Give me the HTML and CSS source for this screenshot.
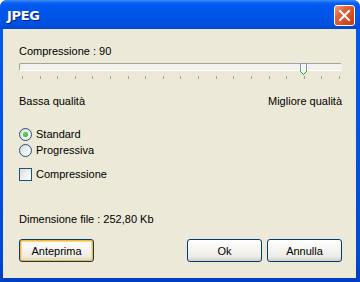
FILE: index.html
```html
<!DOCTYPE html>
<html>
<head>
    <title>JPEG</title>
    <link rel="stylesheet" href="styles.css">
</head>
<body>
    <div class="window">
        <div class="titlebar">
            <span class="title">JPEG</span>
            <span class="close">
                <svg width="19" height="19" viewBox="0 0 19 19">
                    <path d="M5 5 L14 14 M14 5 L5 14" stroke="#fff" stroke-width="2" stroke-linecap="square"/>
                </svg>
            </span>
        </div>
        <div class="client">
            <div class="label">Compressione : 90</div>

            <div class="slider">
                <div class="track"></div>
                <div class="ticks">
                    <i></i><i></i><i></i><i></i><i></i><i></i><i></i><i></i><i></i><i></i>
                    <i></i><i></i><i></i><i></i><i></i><i></i><i></i><i></i><i></i>
                </div>
                <svg class="thumb" width="7" height="13" viewBox="0 0 7 13">
                    <path d="M0.5 0.5 H6.5 V8.5 L3.5 11.5 L0.5 8.5 Z" fill="#F5F5F1" stroke="#7E9DB9"/>
                    <path d="M0.5 7.5 V8.5 L3.5 11.5 L6.5 8.5 V7.5" fill="none" stroke="#21A121"/>
                </svg>
            </div>

            <div class="range-labels">
                <span>Bassa qualità</span>
                <span>Migliore qualità</span>
            </div>

            <div class="options">
                <div class="opt"><span class="radio checked"></span>Standard</div>
                <div class="opt"><span class="radio"></span>Progressiva</div>
            </div>

            <div class="opt check-row"><span class="checkbox"></span>Compressione</div>

            <div class="label size">Dimensione file : 252,80 Kb</div>

            <div class="buttons">
                <button class="btn default">Anteprima</button>
                <div class="right">
                    <button class="btn">Ok</button>
                    <button class="btn">Annulla</button>
                </div>
            </div>
        </div>
    </div>
</body>
</html>
```

FILE: styles.css
```css
html, body {
    margin: 0;
    padding: 0;
    background: #fff;
}
body {
    width: 360px;
    height: 282px;
    overflow: hidden;
    font-family: "Liberation Sans", Arial, sans-serif;
    font-size: 11px;
    color: #000;
}
.window {
    width: 360px;
    height: 282px;
    box-sizing: border-box;
    border-radius: 7px 7px 0 0;
    background: linear-gradient(#0A5FEA, #0058EE 10%, #0054E3 40%, #0148D8 90%, #003DC0);
    display: flex;
    flex-direction: column;
}
.titlebar {
    height: 29px;
    box-sizing: border-box;
    padding: 2px 5px 0 7px;
    display: flex;
    align-items: center;
    justify-content: space-between;
    border-radius: 7px 7px 0 0;
    background: linear-gradient(#3D8DF7, #0A5FF2 3px, #0058EE 6px, #0055E6 55%, #0150E0 85%, #0046D0);
}
.title {
    color: #fff;
    font-family: "DejaVu Sans", sans-serif;
    font-weight: bold;
    font-size: 13px;
    letter-spacing: -0.3px;
    text-shadow: 1px 1px 0 #0A1E80;
}
.close {
    width: 19px;
    height: 19px;
    border: 1px solid #fff;
    border-radius: 3px;
    background: linear-gradient(135deg, #F0A080, #E2613A 35%, #D54A20 70%, #C23A12);
    display: flex;
}
.client {
    flex: 1;
    margin: 0 4px 4px 3px;
    background: #ECE9D8;
    padding: 16px 14px 0 16px;
}
.label {
    height: 13px;
    line-height: 13px;
}
.slider {
    position: relative;
    margin-top: 5px;
    height: 21px;
}
.track {
    margin-top: 3px;
    height: 6px;
    border: 1px solid;
    border-color: #A5A29A #F4F3EE #FFFFFF #A5A29A;
    border-radius: 2px;
    background: #F3F2EC;
}
.ticks {
    margin-top: 5px;
    padding: 0 2px 0 3px;
    display: flex;
    justify-content: space-between;
}
.ticks i {
    width: 1px;
    height: 3px;
    background: #A09F98;
}
.thumb {
    position: absolute;
    left: 281px;
    top: 0;
}
.range-labels {
    margin-top: 11px;
    height: 13px;
    line-height: 13px;
    display: flex;
    justify-content: space-between;
}
.options {
    margin-top: 18px;
}
.opt {
    height: 16px;
    display: flex;
    align-items: center;
}
.radio {
    width: 11px;
    height: 11px;
    border: 1px solid #1C5180;
    border-radius: 50%;
    background: linear-gradient(135deg, #DCDCD7, #FFFFFF);
    margin-right: 4px;
    display: flex;
    align-items: center;
    justify-content: center;
}
.radio.checked::after {
    content: "";
    width: 5px;
    height: 5px;
    border-radius: 50%;
    background: radial-gradient(circle at 40% 40%, #6CD96C, #21A121);
}
.check-row {
    margin-top: 8px;
}
.checkbox {
    width: 11px;
    height: 11px;
    border: 1px solid #1C5180;
    background: linear-gradient(135deg, #DCDCD7, #FFFFFF);
    margin-right: 4px;
}
.size {
    margin-top: 31px;
}
.buttons {
    margin-top: 13px;
    display: flex;
    justify-content: space-between;
}
.right {
    display: flex;
    gap: 5px;
}
.btn {
    width: 75px;
    height: 23px;
    font-family: "Liberation Sans", Arial, sans-serif;
    font-size: 11px;
    color: #000;
    border: 1px solid #003C74;
    border-radius: 3px;
    background: linear-gradient(#FFFFFF, #F4F3EE 50%, #ECEBE4 80%, #D6D0C5);
    padding: 0;
}
.btn.default {
    box-shadow: inset 0 0 0 1px #F9B53E, inset 0 0 0 2px #FDD889;
}
```
